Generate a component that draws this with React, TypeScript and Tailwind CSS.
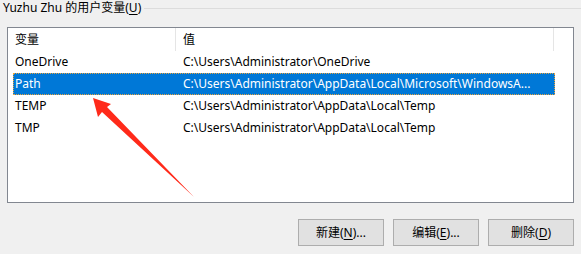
import React from 'react';

const rows = [
  { name: 'OneDrive', value: 'C:\\Users\\Administrator\\OneDrive' },
  { name: 'Path', value: 'C:\\Users\\Administrator\\AppData\\Local\\Microsoft\\WindowsA...', selected: true },
  { name: 'TEMP', value: 'C:\\Users\\Administrator\\AppData\\Local\\Temp' },
  { name: 'TMP', value: 'C:\\Users\\Administrator\\AppData\\Local\\Temp' },
];

const Btn = ({ label, hot, tail }: { label: string; hot: string; tail: string }) => (
  <button className="w-[86px] h-[27px] bg-[#e1e1e1] border border-[#adadad] text-[12px] text-black flex items-center justify-center">
    {label}(<span className="underline underline-offset-2">{hot}</span>){tail}
  </button>
);

export default function App() {
  return (
    <div
      className="relative w-[581px] h-[254px] bg-[#f0f0f0] overflow-hidden text-[12px] text-black"
      style={{ fontFamily: '"Noto Sans", "Noto Sans CJK SC", sans-serif' }}
    >
      <div className="flex items-center h-[16px] pl-[3px]">
        <span className="leading-[16px] whitespace-nowrap">
          Yuzhu Zhu 的用户变量(<span className="underline underline-offset-2">U</span>)
        </span>
        <div className="flex-1 h-px bg-[#dcdcdc] ml-[3px]" />
      </div>

      <div className="ml-[7px] mt-[11px] w-[567px] h-[176px] bg-white border border-[#828790]">
        <div className="flex h-[23px] items-center">
          <div className="w-[168px] pl-[7px] h-full flex items-center border-r border-[#e5e5e5]">变量</div>
          <div className="w-[378px] pl-[7px] h-full flex items-center border-r border-[#e5e5e5]">值</div>
        </div>
        <div className="pl-[5px]">
          {rows.map(r => (
            <div
              key={r.name}
              className={
                r.selected
                  ? 'flex w-[542px] h-[22px] items-center bg-[#0078d7] text-white outline-1 outline-dotted outline-[#e8a33d] -outline-offset-1'
                  : 'flex w-[542px] h-[22px] items-center'
              }
            >
              <div className="w-[170px] pl-[2px] whitespace-nowrap">{r.name}</div>
              <div className="flex-1 whitespace-nowrap overflow-hidden">{r.value}</div>
            </div>
          ))}
        </div>
      </div>

      <div className="flex justify-end gap-[9px] pr-[7px] mt-[16px]">
        <Btn label="新建" hot="N" tail="..." />
        <Btn label="编辑" hot="E" tail="..." />
        <Btn label="删除" hot="D" tail="" />
      </div>

      <svg className="absolute left-0 top-0" width="581" height="254" viewBox="0 0 581 254">
        {/* red pointer arrow */}
        <polygon
          points="93,98 111,104 107,107 194,197 102,112 98,117"
          fill="#ff2a1a"
        />
      </svg>
    </div>
  );
}
